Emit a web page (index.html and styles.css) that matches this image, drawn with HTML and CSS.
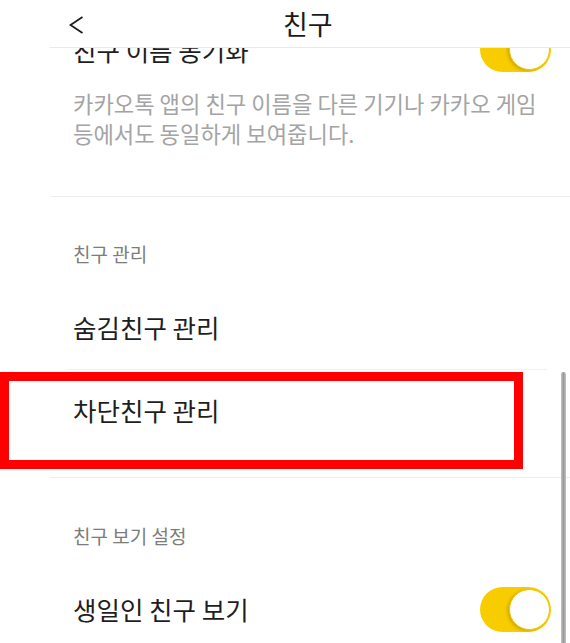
FILE: index.html
```html
<html>

<head>
    <meta charset="utf-8">
    <title>친구</title>
    <link rel="stylesheet" href="styles.css">
</head>

<body>
    <div class="topbar">
        <svg class="backIcon" width="15" height="18" viewBox="0 0 15 18">
            <polyline points="13.5,1 1.5,9 13.5,17" fill="none" stroke="#1a1a1a" stroke-width="1.7" />
        </svg>
        <span class="topbarTitle">친구</span>
    </div>

    <div class="main">
        <div class="group groupFirst">
            <div class="itemRow itemRowFirst">
                <span class="itemText">친구 이름 동기화</span>
                <span class="toggle"><span class="toggleKnob"></span></span>
            </div>
            <div class="itemDesc">카카오톡 앱의 친구 이름을 다른 기기나 카카오 게임<br>등에서도 동일하게 보여줍니다.</div>
        </div>

        <div class="group groupManage">
            <div class="groupLabel">친구 관리</div>
            <div class="itemRow">
                <span class="itemText">숨김친구 관리</span>
            </div>
            <div class="divider"></div>
            <div class="itemRow itemRowShort">
                <span class="itemText">차단친구 관리</span>
                <div class="markBox"></div>
            </div>
        </div>

        <div class="group groupView">
            <div class="groupLabel">친구 보기 설정</div>
            <div class="itemRow">
                <span class="itemText">생일인 친구 보기</span>
                <span class="toggle"><span class="toggleKnob"></span></span>
            </div>
        </div>
    </div>

    <div class="scrollThumb"></div>
</body>

</html>
```

FILE: styles.css
```css
body {
    margin: 0px;
    padding: 0px;
    background-color: #ffffff;
    font-family: "Noto Sans CJK KR", "Noto Sans", sans-serif;
    color: #1e1e1e;
    overflow: hidden;
}

.topbar {
    position: fixed;
    top: 0px;
    left: 50px;
    right: 0px;
    height: 47px;
    z-index: 2;
    display: flex;
    align-items: center;
    padding-left: 19px;
    background-color: #ffffff;
    border-bottom: 1px solid #e9e9e9;
}

.backIcon {
    display: block;
    margin-top: 2px;
}

.topbarTitle {
    margin-left: 199px;
    font-size: 27px;
    line-height: 34px;
    color: #1a1a1a;
}

.main {
    display: flex;
    flex-direction: column;
}

.group {
    margin-left: 50px;
    padding-left: 23px;
    padding-right: 19px;
    border-top: 1px solid #eeeeee;
}

.groupFirst {
    border-top: none;
    padding-bottom: 48px;
}

.groupManage {
    padding-top: 45px;
    padding-bottom: 27px;
}

.groupView {
    padding-top: 46px;
}

.groupLabel {
    font-size: 19px;
    line-height: 24px;
    color: #7c7c7c;
}

.itemRow {
    position: relative;
    display: flex;
    align-items: center;
    justify-content: space-between;
    height: 84px;
    margin-top: 19px;
}

.itemRowFirst {
    height: 45px;
    margin-top: 27px;
}

.itemRowShort {
    height: 80px;
    margin-top: 0px;
}

.itemText {
    font-size: 25.5px;
    line-height: 32px;
}

.itemDesc {
    margin-top: 16px;
    font-size: 22.2px;
    line-height: 30px;
    color: #a4a4a4;
    white-space: nowrap;
}

.divider {
    height: 1px;
    margin-left: -7px;
    margin-right: 4px;
    background-color: #f1f1f1;
}

.toggle {
    position: relative;
    width: 71px;
    height: 45px;
    border-radius: 23px;
    background-color: #f8cd00;
}

.toggleKnob {
    position: absolute;
    top: 2px;
    right: 1px;
    width: 39px;
    height: 39px;
    border-radius: 50%;
    background-color: #ffffff;
    border: 1px solid #efc400;
    box-shadow: -2px 1px 3px rgba(150, 110, 0, 0.35);
}

/* red annotation drawn over the row */
.markBox {
    position: absolute;
    top: 2px;
    left: -73px;
    width: 505px;
    height: 79px;
    border: 9px solid #ff0000;
}

.scrollThumb {
    position: fixed;
    top: 372px;
    right: 4px;
    bottom: 0px;
    width: 5px;
    border-radius: 3px 3px 0px 0px;
    background: linear-gradient(to right, #c4c4c4, #999999 50%, #c4c4c4);
}
```
